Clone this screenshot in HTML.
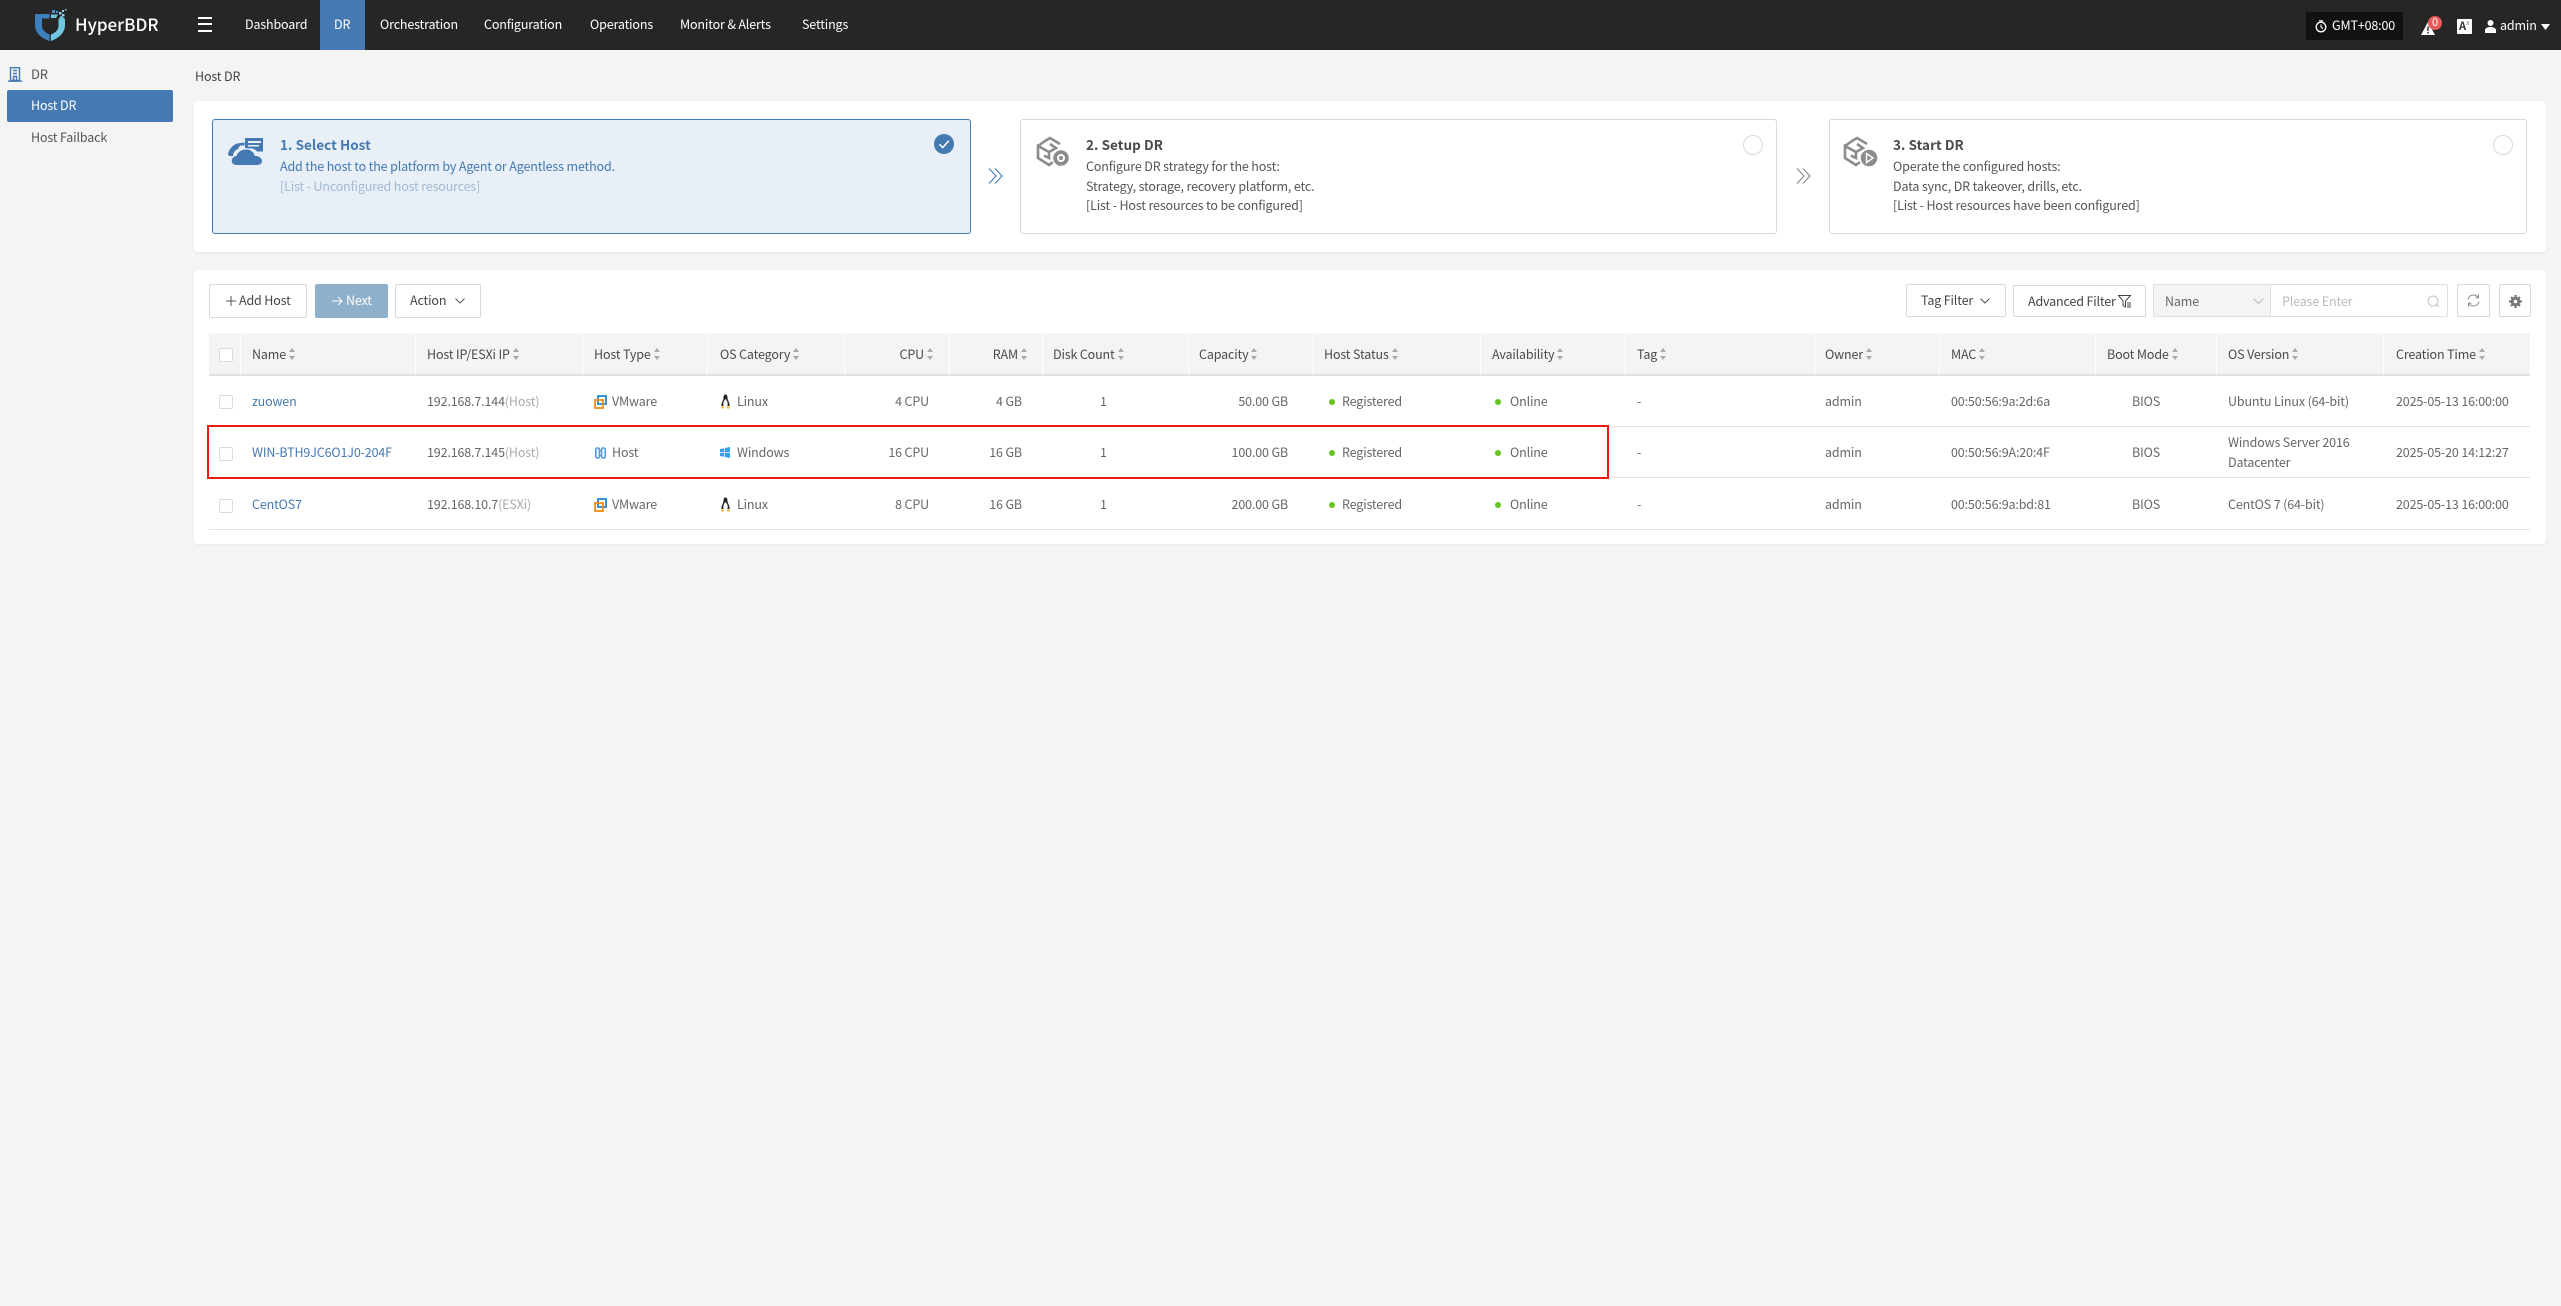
<!DOCTYPE html>
<html lang="en"><head><meta charset="utf-8"><title>HyperBDR</title>
<style>
*{box-sizing:border-box}
html,body{margin:0;padding:0;width:2561px;height:1306px;overflow:hidden;background:#f4f4f4}
body{position:relative;font-family:"Noto Sans CJK SC","Liberation Sans",sans-serif;font-size:12.5px;letter-spacing:-.15px;color:#666}
.a{position:absolute}
.t{position:absolute;line-height:20px;height:20px;white-space:nowrap;margin-top:-1px}
.b{font-weight:700;font-size:13.5px;letter-spacing:.05px}
svg{position:absolute;overflow:visible}
.box{position:absolute;background:#fff;border:1px solid #d9d9d9;border-radius:2px}
.nav{color:#fff}
.step{position:absolute;top:119px;height:115px;border:1px solid #d9d9d9;border-radius:3px;background:#fff}
.h{color:#4a4a4a;}
.h i{display:inline-block;position:relative;width:7px;height:12px;margin-left:3px;vertical-align:-1px}
.h i:before{content:"";position:absolute;left:0;top:0;border:3.5px solid transparent;border-top:0;border-bottom:4px solid #aaa}
.h i:after{content:"";position:absolute;left:0;bottom:0;border:3.5px solid transparent;border-bottom:0;border-top:4px solid #aaa}
.sep{position:absolute;top:333px;height:42px;width:1px;background:#fff}
.line{position:absolute;left:209px;width:2321px;height:1px;background:#e2e2e2}
.cb{position:absolute;left:219px;width:14px;height:14px;background:#fff;border:1px solid #dcdcdc;border-radius:2px}
.lnk{color:#4479b1}
.dot{position:absolute;width:6px;height:6px;border-radius:50%;background:#66c41e}
.g{color:#aaa}
</style></head><body>

<!-- top bar -->
<div class="a" style="left:0;top:0;width:2561px;height:50px;background:#262626"></div>
<svg style="left:35px;top:9px" width="34" height="33" viewBox="0 0 34 33">
<path d="M0 5H14.6V9.5H7V17C7 21 11 24 14.6 25.5V32C8 30 0 25 0 16Z" fill="#3f7fbc"/>
<path d="M15.8 32V25.5C20 24 23.5 21 23.5 17V10.5L26 6.5 30 10V16C30 25 22 30 15.800 32Z" fill="#6fc6de"/>
<path d="M16 9H21L23 5.5H16Z" fill="#6fc6de"/>
<g fill="#4f8fc8"><rect x="17" y="1" width="3" height="3"/><rect x="21" y="2" width="2" height="2"/></g>
<g fill="#8fd0e6"><rect x="24" y="3" width="2.5" height="2.5"/><rect x="27" y="5" width="2.5" height="2.5"/><rect x="27" y="1" width="2" height="2"/><rect x="30" y="0" width="1.5" height="1.5"/></g>
</svg>
<div class="t" style="left:75px;top:15px;color:#fff;font-size:17px;font-weight:500;letter-spacing:0">HyperBDR</div>
<div class="a" style="left:198px;top:17px;width:14px;height:2px;background:#fff"></div>
<div class="a" style="left:198px;top:23px;width:14px;height:2px;background:#fff"></div>
<div class="a" style="left:198px;top:30px;width:14px;height:2px;background:#fff"></div>
<div class="a" style="left:320px;top:0;width:45px;height:50px;background:#4479b1"></div>
<div class="t nav" style="left:245px;top:15px">Dashboard</div>
<div class="t nav" style="left:334px;top:15px">DR</div>
<div class="t nav" style="left:380px;top:15px">Orchestration</div>
<div class="t nav" style="left:484px;top:15px">Configuration</div>
<div class="t nav" style="left:590px;top:15px">Operations</div>
<div class="t nav" style="left:680px;top:15px">Monitor &amp; Alerts</div>
<div class="t nav" style="left:802px;top:15px">Settings</div>

<div class="a" style="left:2306px;top:12px;width:97px;height:28px;background:#111"></div>
<svg style="left:2315px;top:20px" width="12" height="13" viewBox="0 0 12 13"><circle cx="6" cy="7" r="4.8" fill="none" stroke="#fff" stroke-width="1.3"/><path d="M6 4.5V7L8 8.5M4 .8H8" fill="none" stroke="#fff" stroke-width="1.1"/></svg>
<div class="t nav" style="left:2332px;top:16px">GMT+08:00</div>
<svg style="left:2421px;top:22px" width="14" height="13" viewBox="0 0 14 13"><path d="M7 0L14 13H0Z" fill="#fff"/><path d="M7 4.5V9M7 10V11.5" stroke="#262626" stroke-width="1.4"/></svg>
<div class="a" style="left:2428px;top:16px;width:14px;height:14px;border-radius:50%;background:#e95b5b;color:#fff;font-size:11px;line-height:13px;text-align:center">0</div>
<div class="a" style="left:2457px;top:19px;width:15px;height:15px;background:#fff;border-radius:1px"></div>
<div class="t" style="left:2459px;top:17px;color:#333;font-size:11px;font-weight:700">A</div>
<div class="t" style="left:2466px;top:14px;color:#888;font-size:7px">x</div>
<svg style="left:2485px;top:20px" width="11" height="13" viewBox="0 0 11 13"><circle cx="5.5" cy="3" r="3" fill="#fff"/><path d="M0 13V10.5C0 8 2.5 7 5.5 7S11 8 11 10.5V13Z" fill="#fff"/></svg>
<div class="t nav" style="left:2500px;top:16px">admin</div>
<svg style="left:2541px;top:24px" width="9" height="6" viewBox="0 0 9 6"><path d="M0 0H9L4.5 6Z" fill="#fff"/></svg>

<!-- sidebar -->
<svg style="left:8px;top:67px" width="14" height="15" viewBox="0 0 14 15"><path d="M2.5 .7H11.5V13.5H2.5ZM0 14.2H14M5 3.5H9M5 6.5H9M5.5 13.5V9.5H8.5V13.5" fill="none" stroke="#4479b1" stroke-width="1.4"/></svg>
<div class="t" style="left:31px;top:65px;color:#555;font-size:13px">DR</div>
<div class="a" style="left:7px;top:90px;width:166px;height:32px;background:#4479b1;border-radius:2px"></div>
<div class="t" style="left:31px;top:96px;color:#fff">Host DR</div>
<div class="t" style="left:31px;top:128px;color:#555">Host Failback</div>

<div class="t" style="left:195px;top:67px;color:#444">Host DR</div>

<!-- steps card -->
<div class="a" style="left:194px;top:101px;width:2352px;height:151px;background:#fff;border-radius:4px;box-shadow:0 1px 3px rgba(0,0,0,.05)"></div>
<div class="step" style="left:212px;width:759px;background:#e8eff6;border-color:#4479b1"></div>
<svg style="left:228px;top:136px" width="36" height="30" viewBox="0 0 36 30" fill="#4479b1">
<path d="M0 18C1 13 5 9 9 7.5L16.5 6.5V9.5H12L10 13C7 14 5 17 5 20H1Z"/>
<path fill-rule="evenodd" d="M17 2H35V15.5H29C27 13 24 12 21.5 12.5L17 12ZM20 5V7H33V5ZM20 9V10.5H31V9Z"/>
<path d="M9 29C5 29 3.5 26.5 3.8 24.5 4 22 6 20 8.5 20 10 15.5 14 13.5 18 13.5 23 13.5 26 16.5 26.7 20 30 19.5 34 22 34 25 34 28 31 29 29 29Z"/>
</svg>
<div class="t b" style="left:280px;top:135px;color:#4479b1">1. Select Host</div>
<div class="t" style="left:280px;top:157px;color:#4479b1">Add the host to the platform by Agent or Agentless method.</div>
<div class="t" style="left:280px;top:177px;color:#a3bbd3">[List - Unconfigured host resources]</div>
<svg style="left:934px;top:134px" width="20" height="20" viewBox="0 0 20 20"><circle cx="10" cy="10" r="10" fill="#4479b1"/><path d="M5.5 10.3L8.8 13.5 14.8 6.8" fill="none" stroke="#fff" stroke-width="1.5"/></svg>

<svg style="left:988px;top:168px" width="16" height="16" viewBox="0 0 16 16" fill="none" stroke="#4479b1" stroke-width="1.1"><path d="M1 .5L8 8 1 15.5M7 .5L14 8 7 15.5"/></svg>

<div class="step" style="left:1020px;width:757px"></div>
<svg style="left:1036px;top:136px" width="36" height="32" viewBox="0 0 36 32" fill="none" stroke="#8c8c8c" stroke-width="2.6">
<path d="M9 5L14 2 24 8M14 8L20 12 13 16 2 10V22L13 29 17 26M2 10L9 5M13 16V22L8 19.5"/>
<circle cx="25" cy="22" r="8.5" fill="#8c8c8c" stroke="#fff" stroke-width="1.5"/>
<circle cx="25" cy="22" r="3" stroke="#fff" stroke-width="2"/>
</svg>
<div class="t b" style="left:1086px;top:135px;color:#4a4a4a">2. Setup DR</div>
<div class="t" style="left:1086px;top:157px;color:#555">Configure DR strategy for the host:</div>
<div class="t" style="left:1086px;top:177px;color:#555">Strategy, storage, recovery platform, etc.</div>
<div class="t" style="left:1086px;top:196px;color:#555">[List - Host resources to be configured]</div>
<div class="a" style="left:1743px;top:135px;width:20px;height:20px;border:1px solid #d9d9d9;border-radius:50%"></div>

<svg style="left:1796px;top:168px" width="16" height="16" viewBox="0 0 16 16" fill="none" stroke="#888" stroke-width="1.1"><path d="M1 .5L8 8 1 15.5M7 .5L14 8 7 15.5"/></svg>

<div class="step" style="left:1829px;width:698px"></div>
<svg style="left:1843px;top:136px" width="38" height="32" viewBox="0 0 38 32" fill="none" stroke="#8c8c8c" stroke-width="2.6">
<path d="M9 5L14 2 24 8M14 8L20 12 13 16 2 10V22L13 29 17 26M2 10L9 5M13 16V22L8 19.5"/>
<circle cx="26" cy="22" r="9" fill="#8c8c8c" stroke="#fff" stroke-width="1.5"/>
<path d="M23.5 17.5L30 22 23.5 26.5Z" fill="#8c8c8c" stroke="#fff" stroke-width="1.4"/>
</svg>
<div class="t b" style="left:1893px;top:135px;color:#4a4a4a">3. Start DR</div>
<div class="t" style="left:1893px;top:157px;color:#555">Operate the configured hosts:</div>
<div class="t" style="left:1893px;top:177px;color:#555">Data sync, DR takeover, drills, etc.</div>
<div class="t" style="left:1893px;top:196px;color:#555">[List - Host resources have been configured]</div>
<div class="a" style="left:2493px;top:135px;width:20px;height:20px;border:1px solid #d9d9d9;border-radius:50%"></div>

<!-- table card -->
<div class="a" style="left:194px;top:270px;width:2352px;height:274px;background:#fff;border-radius:4px;box-shadow:0 1px 3px rgba(0,0,0,.05)"></div>

<div class="box" style="left:209px;top:284px;width:98px;height:34px"></div>
<svg style="left:225px;top:295px" width="12" height="12" viewBox="0 0 12 12"><path d="M6 1V11M1 6H11" stroke="#555" stroke-width="1"/></svg>
<div class="t" style="left:239px;top:291px;color:#444">Add Host</div>
<div class="a" style="left:315px;top:284px;width:73px;height:34px;background:#8fb0ca;border-radius:2px"></div>
<svg style="left:331px;top:295px" width="12" height="12" viewBox="0 0 12 12"><path d="M1 6H11M7 2L11 6 7 10" fill="none" stroke="#fff" stroke-width="1"/></svg>
<div class="t" style="left:346px;top:291px;color:#fff">Next</div>
<div class="box" style="left:395px;top:284px;width:86px;height:34px"></div>
<div class="t" style="left:410px;top:291px;color:#444">Action</div>
<svg style="left:455px;top:298px" width="10" height="6" viewBox="0 0 10 6"><path d="M.5 .5L5 5 9.500 .5" fill="none" stroke="#555" stroke-width="1"/></svg>

<div class="box" style="left:1906px;top:284px;width:100px;height:33px"></div>
<div class="t" style="left:1921px;top:291px;color:#444">Tag Filter</div>
<svg style="left:1980px;top:298px" width="10" height="6" viewBox="0 0 10 6"><path d="M.5 .5L5 5 9.500 .5" fill="none" stroke="#555" stroke-width="1"/></svg>
<div class="box" style="left:2013px;top:285px;width:133px;height:32px"></div>
<div class="t" style="left:2028px;top:292px;color:#444">Advanced Filter</div>
<svg style="left:2118px;top:295px" width="14" height="13" viewBox="0 0 14 13"><path d="M.5 .5H12.500L7.500 6V12L5 10.500V6Z" fill="none" stroke="#444" stroke-width="1"/><path d="M9 8H13M9 10H13M9 12H13" stroke="#444" stroke-width=".9"/></svg>
<div class="a" style="left:2153px;top:284px;width:295px;height:33px;background:#fff;border:1px solid #e0e0e0;border-radius:2px"></div>
<div class="a" style="left:2153px;top:284px;width:118px;height:33px;background:#f4f4f4;border:1px solid #e0e0e0;border-radius:2px 0 0 2px"></div>
<div class="t" style="left:2165px;top:292px;color:#666">Name</div>
<svg style="left:2253px;top:298px" width="11" height="6" viewBox="0 0 11 6"><path d="M.5 .5L5.500 5.500 10.500 .5" fill="none" stroke="#bbb" stroke-width="1"/></svg>
<div class="t" style="left:2282px;top:292px;color:#bbb">Please Enter</div>
<svg style="left:2427px;top:295px" width="13" height="13" viewBox="0 0 13 13"><circle cx="6" cy="6" r="5" fill="none" stroke="#c4c4c4" stroke-width="1"/><path d="M9.500 9.500L12 12" stroke="#c4c4c4"/></svg>
<div class="box" style="left:2457px;top:284px;width:33px;height:33px"></div>
<svg style="left:2467px;top:294px" width="13" height="13" viewBox="0 0 13 13" fill="none" stroke="#888" stroke-width="1"><path d="M1 5.500C1.500 3 3.500 1 6.500 1 8.500 1 10 2 11 3.500M12 7.500C11.500 10 9.500 12 6.500 12 4.500 12 3 11 2 9.500"/><path d="M11.500 .5V3.800H8.500M1.500 12.500V9.200H4.500"/></svg>
<div class="box" style="left:2499px;top:284px;width:32px;height:33px"></div>
<svg style="left:2509px;top:295px" width="13" height="13" viewBox="0 0 13 13"><circle cx="6.500" cy="6.500" r="3.300" fill="none" stroke="#777" stroke-width="3"/><path d="M6.500 0V13M0 6.500H13M2 2L11 11M11 2L2 11" stroke="#777" stroke-width="2.200" stroke-dasharray="2.500 8 2.500"/></svg>

<!-- header -->
<div class="a" style="left:209px;top:333px;width:2321px;height:43px;background:#f4f4f4;border-bottom:2px solid #e0e0e0"></div>
<div class="sep" style="left:240px"></div><div class="sep" style="left:415px"></div><div class="sep" style="left:582px"></div><div class="sep" style="left:707px"></div><div class="sep" style="left:844px"></div><div class="sep" style="left:949px"></div><div class="sep" style="left:1042px"></div><div class="sep" style="left:1188px"></div><div class="sep" style="left:1313px"></div><div class="sep" style="left:1480px"></div><div class="sep" style="left:1625px"></div><div class="sep" style="left:1814px"></div><div class="sep" style="left:1939px"></div><div class="sep" style="left:2095px"></div><div class="sep" style="left:2216px"></div><div class="sep" style="left:2383px"></div>
<div class="cb" style="top:348px"></div>
<div class="t h" style="left:252px;top:345px">Name<i></i></div>
<div class="t h" style="left:427px;top:345px">Host IP/ESXi IP<i></i></div>
<div class="t h" style="left:594px;top:345px">Host Type<i></i></div>
<div class="t h" style="left:720px;top:345px">OS Category<i></i></div>
<div class="t h" style="right:1627px;top:345px">CPU<i></i></div>
<div class="t h" style="right:1533px;top:345px">RAM<i></i></div>
<div class="t h" style="left:1053px;top:345px">Disk Count<i></i></div>
<div class="t h" style="left:1199px;top:345px">Capacity<i></i></div>
<div class="t h" style="left:1324px;top:345px">Host Status<i></i></div>
<div class="t h" style="left:1492px;top:345px">Availability<i></i></div>
<div class="t h" style="left:1637px;top:345px">Tag<i></i></div>
<div class="t h" style="left:1825px;top:345px">Owner<i></i></div>
<div class="t h" style="left:1951px;top:345px">MAC<i></i></div>
<div class="t h" style="left:2107px;top:345px">Boot Mode<i></i></div>
<div class="t h" style="left:2228px;top:345px">OS Version<i></i></div>
<div class="t h" style="left:2396px;top:345px">Creation Time<i></i></div>

<div class="line" style="top:426px"></div>
<div class="line" style="top:477px"></div>
<div class="line" style="top:529px"></div>

<!-- row 1 -->
<div class="cb" style="top:395px"></div>
<div class="t lnk" style="left:252px;top:392px">zuowen</div>
<div class="t" style="left:427px;top:392px">192.168.7.144<span class="g">(Host)</span></div>
<svg style="left:594px;top:395px" width="13" height="14" viewBox="0 0 13 14" fill="none" stroke-width="1.8"><rect x="4" y="1" width="8" height="8" stroke="#1e88d9"/><rect x="1" y="5" width="8" height="8" stroke="#f08a1d"/></svg>
<div class="t" style="left:612px;top:392px">VMware</div>
<svg style="left:720px;top:394px" width="11" height="15" viewBox="0 0 11 15"><path d="M5.500 .5C7.500 .5 7.500 3 7.500 4.500 8 7 10 9 9.500 12H1.500C1 9 3 7 3.500 4.500 3.500 3 3.500 .5 5.500 .5Z" fill="#222"/><path d="M5.500 5C7.500 7 8 9 7.500 12H3.500C3 9 3.500 7 5.500 5Z" fill="#fff"/><path d="M1 12.500H4.500L3.500 14.500H1.500ZM6.500 12.500H10L9.500 14.500H7.500Z" fill="#f3b61f"/></svg>
<div class="t" style="left:737px;top:392px">Linux</div>
<div class="t" style="right:1632px;top:392px">4 CPU</div>
<div class="t" style="right:1539px;top:392px">4 GB</div>
<div class="t" style="left:1100px;top:392px">1</div>
<div class="t" style="right:1273px;top:392px">50.00 GB</div>
<div class="dot" style="left:1329px;top:399px"></div>
<div class="t" style="left:1342px;top:392px">Registered</div>
<div class="dot" style="left:1495px;top:399px"></div>
<div class="t" style="left:1510px;top:392px">Online</div>
<div class="t" style="left:1637px;top:392px">-</div>
<div class="t" style="left:1825px;top:392px">admin</div>
<div class="t" style="left:1951px;top:392px">00:50:56:9a:2d:6a</div>
<div class="t" style="left:2132px;top:392px">BIOS</div>
<div class="t" style="left:2228px;top:392px">Ubuntu Linux (64-bit)</div>
<div class="t" style="left:2396px;top:392px">2025-05-13 16:00:00</div>

<!-- row 2 -->
<div class="cb" style="top:447px"></div>
<div class="t lnk" style="left:252px;top:443px">WIN-BTH9JC6O1J0-204F</div>
<div class="t" style="left:427px;top:443px">192.168.7.145<span class="g">(Host)</span></div>
<svg style="left:595px;top:447px" width="11" height="12" viewBox="0 0 11 12" fill="none" stroke="#4a9be8" stroke-width="1.600"><rect x=".8" y="1" width="3.600" height="10" rx="1.500"/><rect x="6.600" y="1" width="3.600" height="10" rx="1.500"/><path d="M4 3.500H7M4 8.500H7"/></svg>
<div class="t" style="left:612px;top:443px">Host</div>
<svg style="left:720px;top:447px" width="10" height="11" viewBox="0 0 10 11" fill="#2ba5e8"><path d="M0 2L4.300 1.200V5.200H0ZM5 1L10 0V5.200H5ZM0 6H4.300V9.800L0 9ZM5 6H10V11L5 10Z"/></svg>
<div class="t" style="left:737px;top:443px">Windows</div>
<div class="t" style="right:1632px;top:443px">16 CPU</div>
<div class="t" style="right:1539px;top:443px">16 GB</div>
<div class="t" style="left:1100px;top:443px">1</div>
<div class="t" style="right:1273px;top:443px">100.00 GB</div>
<div class="dot" style="left:1329px;top:450px"></div>
<div class="t" style="left:1342px;top:443px">Registered</div>
<div class="dot" style="left:1495px;top:450px"></div>
<div class="t" style="left:1510px;top:443px">Online</div>
<div class="t" style="left:1637px;top:443px">-</div>
<div class="t" style="left:1825px;top:443px">admin</div>
<div class="t" style="left:1951px;top:443px">00:50:56:9A:20:4F</div>
<div class="t" style="left:2132px;top:443px">BIOS</div>
<div class="t" style="left:2228px;top:433px">Windows Server 2016</div>
<div class="t" style="left:2228px;top:453px">Datacenter</div>
<div class="t" style="left:2396px;top:443px">2025-05-20 14:12:27</div>

<!-- row 3 -->
<div class="cb" style="top:499px"></div>
<div class="t lnk" style="left:252px;top:495px">CentOS7</div>
<div class="t" style="left:427px;top:495px">192.168.10.7<span class="g">(ESXi)</span></div>
<svg style="left:594px;top:498px" width="13" height="14" viewBox="0 0 13 14" fill="none" stroke-width="1.8"><rect x="4" y="1" width="8" height="8" stroke="#1e88d9"/><rect x="1" y="5" width="8" height="8" stroke="#f08a1d"/></svg>
<div class="t" style="left:612px;top:495px">VMware</div>
<svg style="left:720px;top:497px" width="11" height="15" viewBox="0 0 11 15"><path d="M5.500 .5C7.500 .5 7.500 3 7.500 4.500 8 7 10 9 9.500 12H1.500C1 9 3 7 3.500 4.500 3.500 3 3.500 .5 5.500 .5Z" fill="#222"/><path d="M5.500 5C7.500 7 8 9 7.500 12H3.500C3 9 3.500 7 5.500 5Z" fill="#fff"/><path d="M1 12.500H4.500L3.500 14.500H1.500ZM6.500 12.500H10L9.500 14.500H7.500Z" fill="#f3b61f"/></svg>
<div class="t" style="left:737px;top:495px">Linux</div>
<div class="t" style="right:1632px;top:495px">8 CPU</div>
<div class="t" style="right:1539px;top:495px">16 GB</div>
<div class="t" style="left:1100px;top:495px">1</div>
<div class="t" style="right:1273px;top:495px">200.00 GB</div>
<div class="dot" style="left:1329px;top:502px"></div>
<div class="t" style="left:1342px;top:495px">Registered</div>
<div class="dot" style="left:1495px;top:502px"></div>
<div class="t" style="left:1510px;top:495px">Online</div>
<div class="t" style="left:1637px;top:495px">-</div>
<div class="t" style="left:1825px;top:495px">admin</div>
<div class="t" style="left:1951px;top:495px">00:50:56:9a:bd:81</div>
<div class="t" style="left:2132px;top:495px">BIOS</div>
<div class="t" style="left:2228px;top:495px">CentOS 7 (64-bit)</div>
<div class="t" style="left:2396px;top:495px">2025-05-13 16:00:00</div>

<!-- red highlight -->
<div class="a" style="left:207px;top:425px;width:1402px;height:54px;border:2px solid #f01c12"></div>

</body></html>
